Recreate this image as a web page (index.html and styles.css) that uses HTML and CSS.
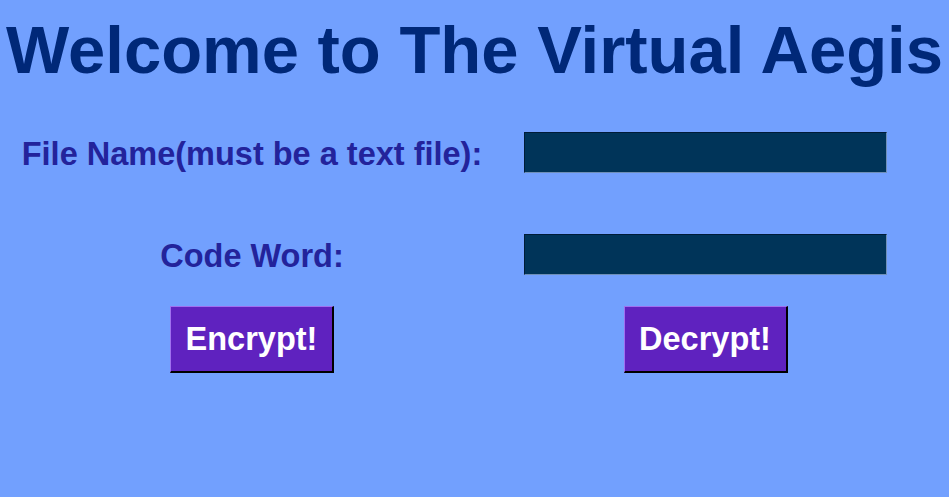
FILE: index.html
```html
<!DOCTYPE html>
<html>
<head>
<meta charset="utf-8">
<link rel="stylesheet" href="styles.css">
</head>
<body>
<h1 class="title">Welcome to The Virtual Aegis</h1>
<form class="form">
  <label class="label" for="fname">File Name(must be a text file):</label>
  <div class="cell"><input class="field" id="fname" type="text"></div>
  <label class="label" for="code">Code Word:</label>
  <div class="cell"><input class="field" id="code" type="password"></div>
  <div class="cell"><button class="btn" type="button">Encrypt!</button></div>
  <div class="cell"><button class="btn" type="button">Decrypt!</button></div>
</form>
</body>
</html>
```
FILE: styles.css
```css
html, body {
  margin: 0;
  padding: 0;
}
body {
  background: #72a0fe;
  font-family: "Liberation Sans", Arial, sans-serif;
  height: 497px;
  overflow: hidden;
}
.title {
  margin: 0;
  padding-top: 11px;
  text-align: center;
  font-size: 67px;
  font-weight: bold;
  color: #002878;
  line-height: 78px;
  white-space: nowrap;
}
.form {
  display: grid;
  grid-template-columns: 504px 403px;
  margin-top: 12px;
}
.label {
  box-sizing: border-box;
  display: flex;
  align-items: center;
  justify-content: center;
  font-size: 32.5px;
  font-weight: bold;
  color: #23239b;
  height: 102px;
  padding-top: 4px;
}
.cell {
  display: flex;
  align-items: center;
  justify-content: center;
}
.field {
  box-sizing: border-box;
  width: 363px;
  height: 41px;
  background: #003459;
  border: 1px solid;
  border-color: #001c38 #6f8fb8 #6f8fb8 #001c38;
  margin: 0;
  padding: 0;
}
.btn {
  box-sizing: border-box;
  width: 164px;
  height: 67px;
  background: #5f22bf;
  color: #ffffff;
  font-family: "Liberation Sans", Arial, sans-serif;
  font-size: 32.5px;
  font-weight: bold;
  border: solid;
  border-color: #a070f0 #000000 #000000 #a070f0;
  border-width: 1px 2px 2px 1px;
  padding: 0;
  margin-top: 1px;
}
```
